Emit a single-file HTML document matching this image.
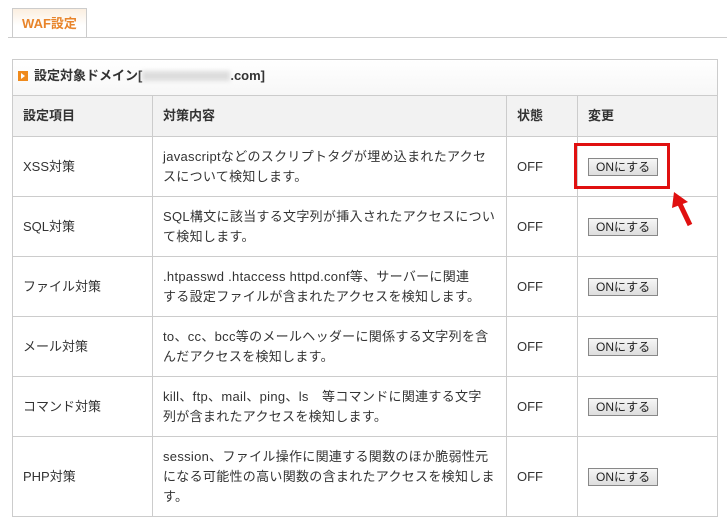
<!DOCTYPE html>
<html><head><meta charset="utf-8"><style>
body{margin:0;width:727px;height:524px;background:#fff;font-family:"Liberation Sans","Noto Sans CJK JP",sans-serif;font-size:13px;color:#333;position:relative;overflow:hidden}
.tab{position:absolute;left:12px;top:8px;width:75px;height:29px;border:1px solid #ccc;border-bottom:none;background:linear-gradient(#fbeee0,#fff 60%);box-sizing:border-box;color:#e8842a;font-weight:bold;font-size:13px;line-height:30px;text-align:center}
.tabline{position:absolute;left:8px;right:0;top:37px;border-top:1px solid #ccc}
.box{position:absolute;left:12px;top:59px;width:706px;height:456px;border:1px solid #ccc;border-bottom:none;box-sizing:border-box}
.title{position:absolute;left:13px;top:60px;width:704px;height:35px;background:linear-gradient(#fff,#f7f7f7);font-weight:bold;line-height:32px}
.title i{display:inline-block;width:10px;height:10px;background:#ef8a1c;margin:0 6px 0 5px;vertical-align:-1px;position:relative}
.title i:after{content:"";position:absolute;left:3px;top:2px;border-left:4px solid #fff;border-top:3px solid transparent;border-bottom:3px solid transparent}
.blur{display:inline-block;width:88px;height:10px;background:#ddd;filter:blur(2px);vertical-align:-1px}
table{position:absolute;left:12px;top:95px;width:706px;border-collapse:collapse}
td{border:1px solid #ccc;padding:0 10px;line-height:20px}
td.d{letter-spacing:0.3px;padding-right:8px}
tr.h td{background:#f2f2f2;font-weight:bold;height:40px}
tr.r td{height:59px}
.btn{display:inline-block;border:1px solid #888;background:linear-gradient(#f6f6f6,#ddd);padding:0 7px;line-height:16px;font-size:12px;color:#222}
.red{position:absolute;left:574px;top:143px;width:96px;height:46px;border:3px solid #e01010;box-sizing:border-box}
</style></head><body>
<div class="tab">WAF設定</div><div class="tabline"></div>
<div class="box"></div>
<div class="title"><i></i>設定対象ドメイン[<span class="blur"></span>.com]</div>
<table>
<tr class="h"><td style="width:119px">設定項目</td><td style="width:333px">対策内容</td><td style="width:50px">状態</td><td>変更</td></tr>
<tr class="r"><td>XSS対策</td><td class="d">javascriptなどのスクリプトタグが埋め込まれたアクセ<br>スについて検知します。</td><td>OFF</td><td><span class="btn">ONにする</span></td></tr>
<tr class="r"><td>SQL対策</td><td class="d">SQL構文に該当する文字列が挿入されたアクセスについ<br>て検知します。</td><td>OFF</td><td><span class="btn">ONにする</span></td></tr>
<tr class="r"><td>ファイル対策</td><td class="d">.htpasswd .htaccess httpd.conf等、サーバーに関連<br>する設定ファイルが含まれたアクセスを検知します。</td><td>OFF</td><td><span class="btn">ONにする</span></td></tr>
<tr class="r"><td>メール対策</td><td class="d">to、cc、bcc等のメールヘッダーに関係する文字列を含<br>んだアクセスを検知します。</td><td>OFF</td><td><span class="btn">ONにする</span></td></tr>
<tr class="r"><td>コマンド対策</td><td class="d">kill、ftp、mail、ping、ls　等コマンドに関連する文字<br>列が含まれたアクセスを検知します。</td><td>OFF</td><td><span class="btn">ONにする</span></td></tr>
<tr class="r"><td style="height:79px">PHP対策</td><td class="d">session、ファイル操作に関連する関数のほか脆弱性元<br>になる可能性の高い関数の含まれたアクセスを検知しま<br>す。</td><td>OFF</td><td><span class="btn">ONにする</span></td></tr>
</table>
<div class="red"></div>
<svg style="position:absolute;left:664px;top:188px" width="40" height="42"><line x1="26" y1="37" x2="15" y2="14" stroke="#e01010" stroke-width="5"/><polygon points="10,4 24,14 8,20" fill="#e01010"/></svg>
</body></html>
